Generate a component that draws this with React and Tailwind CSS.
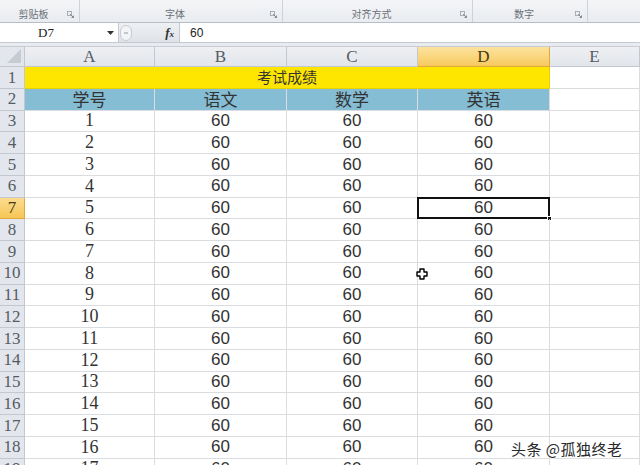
import React from "react";

const serif = { fontFamily: '"Liberation Serif", "Noto Sans CJK SC", serif' };
const cols = ["A", "B", "C", "D", "E"];
const widths = ["w-[130px]", "w-[132px]", "w-[131px]", "w-[132px]", "flex-1"];
const headW = "w-[25px]";

function Launcher() {
  return (
    <svg width="7" height="7" viewBox="0 0 7 7" className="mt-[1px]">
      <rect x="0.5" y="0.5" width="4" height="4" fill="none" stroke="#9aa0a8" strokeWidth="0.8" />
      <path d="M3 3 L6.5 6.5 M4.5 6.5 H6.5 V4.5" stroke="#7a8088" strokeWidth="0.9" fill="none" />
    </svg>
  );
}

function RibbonGroup({ label, w, last }) {
  return (
    <div className={`${w} h-full flex items-center pt-[5px] relative ${last ? "" : "border-r border-[#cfd3d9]"}`}>
      <div className="flex-1 text-center text-[10px] text-[#6a7078]" style={{ fontFamily: '"Noto Sans CJK SC", sans-serif' }}>
        {label}
      </div>
      <div className="pr-[5px] flex items-center">
        <Launcher />
      </div>
    </div>
  );
}

function Row({ n, children, h = "h-[21.75px]" }) {
  const active = n === 7;
  return (
    <div className={`flex ${h}`}>
      <div
        className={`${headW} shrink-0 flex items-center justify-center text-[17px] border-r border-b ${
          active
            ? "bg-gradient-to-b from-[#fbdc8e] to-[#f6c654] text-[#4a3a10] border-[#e2a83c]"
            : "bg-[#e3e7ed] text-[#555b63] border-[#c3c8d0]"
        }`}
        style={serif}
      >
        {n}
      </div>
      {children}
    </div>
  );
}

function Cell({ w, children, className = "", style }) {
  return (
    <div
      className={`${w} shrink-0 flex items-center justify-center border-r border-b border-[#dadcdf] text-[#333] text-[17px] ${className}`}
      style={style}
    >
      {children}
    </div>
  );
}

export default function App() {
  const data = Array.from({ length: 17 }, (_, i) => i + 1);
  return (
    <div className="w-[640px] h-[465px] overflow-hidden bg-white relative" style={{ fontFamily: '"Liberation Sans", Arial, sans-serif' }}>
      {/* Ribbon group labels */}
      <div className="h-[23px] flex bg-gradient-to-b from-[#f4f5f7] to-[#e9ecf0] border-b border-[#b9bec6]">
        <RibbonGroup label="剪贴板" w="w-[80px]" />
        <RibbonGroup label="字体" w="w-[203px]" />
        <RibbonGroup label="对齐方式" w="w-[190px]" />
        <RibbonGroup label="数字" w="w-[115px]" />
        <div className="flex-1" />
      </div>
      {/* Formula bar */}
      <div className="h-[20px] flex bg-white border-b border-[#c5cad1]">
        <div className="w-[118px] flex items-center">
          <div className="flex-1 pl-[38px] text-[13px] text-[#222]" style={serif}>D7</div>
          <svg width="7" height="4" viewBox="0 0 7 4" className="mr-[4px]">
            <path d="M0 0 H7 L3.5 4 Z" fill="#333" />
          </svg>
        </div>
        <div className="w-[62px] flex items-center bg-gradient-to-b from-[#eef0f3] to-[#dfe3e8] border-x border-[#c5cad1]">
          <div className="ml-[1px] w-[12px] h-[16px] rounded-full border border-[#c8ccd2] bg-[#f3f4f6] flex items-center justify-center">
            <div className="w-[4px] h-[2px] bg-[#c3c7cd]" />
          </div>
          <div className="flex-1 flex justify-end pr-[5px]">
            <span className="text-[13px] italic font-bold text-[#333]" style={serif}>
              f<span className="text-[9px]">x</span>
            </span>
          </div>
        </div>
        <div className="flex-1 flex items-center pl-[10px] text-[12px] text-[#222]">60</div>
      </div>
      <div className="h-[4px] bg-[#e8ebef] border-b border-[#c9cdd3]" />
      {/* Column headers */}
      <div className="flex h-[20px]">
        <div className={`${headW} shrink-0 bg-[#e3e7ed] border-r border-b border-[#c3c8d0] flex items-end justify-end pr-[3px] pb-[3px]`}>
          <svg width="14" height="14" viewBox="0 0 14 14">
            <path d="M14 0 V14 H0 Z" fill="#c6cbd2" />
          </svg>
        </div>
        {cols.map((c, i) => (
          <div
            key={c}
            className={`${widths[i]} shrink-0 flex items-center justify-center text-[17px] border-r border-b ${
              c === "D"
                ? "bg-gradient-to-b from-[#fde39d] to-[#f7c95c] text-[#4a3a10] border-[#e2a83c]"
                : "bg-gradient-to-b from-[#eef0f3] to-[#e2e5ea] text-[#555b63] border-[#c3c8d0]"
            }`}
            style={serif}
          >
            {c}
          </div>
        ))}
      </div>
      {/* Row 1 */}
      <Row n={1}>
        <div className="w-[525px] shrink-0 bg-[#ffe600] flex items-center justify-center border-r border-b border-[#e6d200] text-[15px] text-[#333]" style={{ fontFamily: '"Noto Sans CJK SC", sans-serif' }}>
          考试成绩
        </div>
        <Cell w="flex-1" />
      </Row>
      {/* Row 2 */}
      <Row n={2}>
        {["学号", "语文", "数学", "英语"].map((t, i) => (
          <Cell
            key={t}
            w={widths[i]}
            className="bg-[#85bdd4] border-[#85bdd4] text-[17px] text-[#2b2f33]"
            style={{ fontFamily: '"Noto Sans CJK SC", sans-serif' }}
          >
            {t}
          </Cell>
        ))}
        <Cell w="flex-1" />
      </Row>
      {data.map((d, idx) => {
        const n = idx + 3;
        return (
          <Row key={n} n={n}>
            <Cell w={widths[0]} style={serif} className="text-[18px]">{d}</Cell>
            <Cell w={widths[1]}>60</Cell>
            <Cell w={widths[2]}>60</Cell>
            <Cell w={widths[3]} className="relative">
              60
              {n === 7 && (
                <div className="absolute -left-[1px] -top-[1px] -right-[1px] -bottom-[1px] border-2 border-[#111]">
                  <div className="absolute -right-[4px] -bottom-[4px] w-[5px] h-[5px] bg-[#111] border border-white" />
                </div>
              )}
            </Cell>
            <Cell w="flex-1" />
          </Row>
        );
      })}
      {/* Cursor */}
      <svg className="absolute left-[416px] top-[268px]" width="12" height="12" viewBox="0 0 12 12">
        <path d="M4 1 H8 V4 H11 V8 H8 V11 H4 V8 H1 V4 H4 Z" fill="#fff" stroke="#000" strokeWidth="1.4" strokeLinejoin="round" />
      </svg>
      {/* Watermark */}
      <div
        className="absolute left-[511px] top-[438px] text-[15px] text-[#2a2a2a] tracking-[0.5px] [text-shadow:0_0_2px_#fff,0_0_3px_#fff,0_0_4px_#fff]"
        style={{ fontFamily: '"Noto Sans CJK SC", sans-serif' }}
      >
        头条 @孤独终老
      </div>
    </div>
  );
}
